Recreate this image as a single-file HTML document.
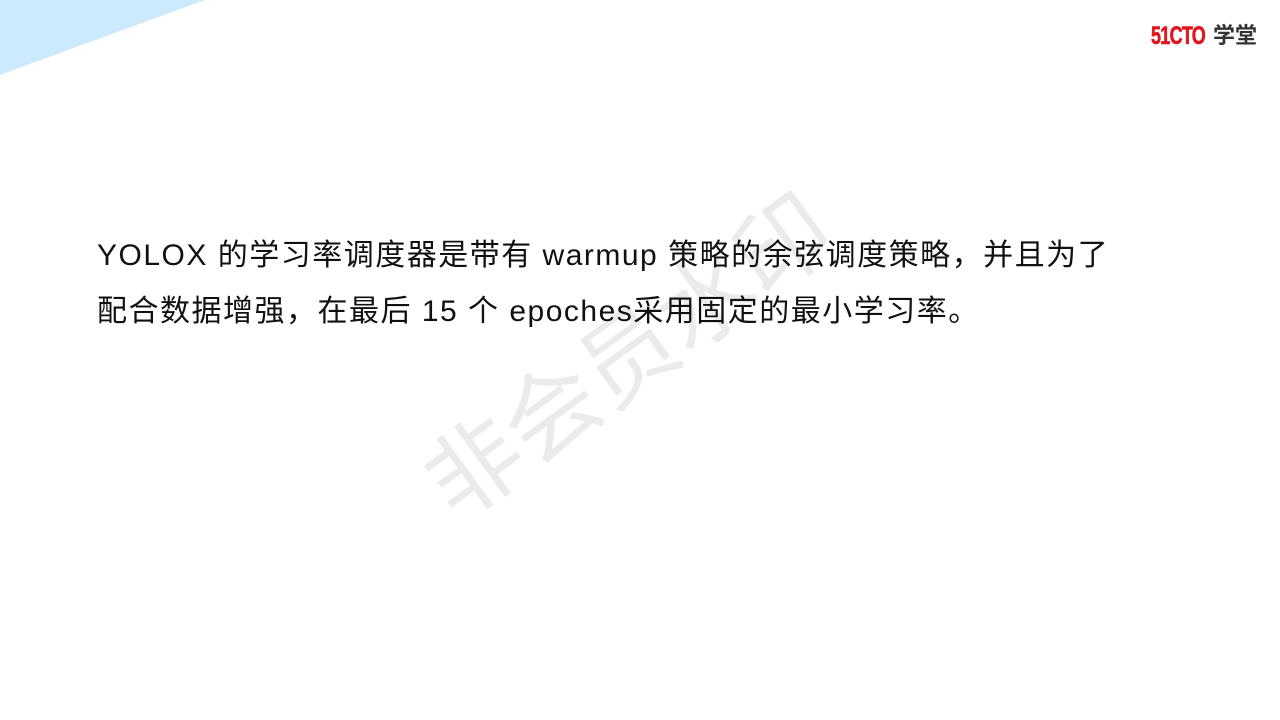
<!DOCTYPE html>
<html><head><meta charset="utf-8"><style>
html,body{margin:0;padding:0;}
body{width:1280px;height:720px;position:relative;overflow:hidden;background:#fff;font-family:"Liberation Sans","Noto Sans CJK SC",sans-serif;}
.tri{position:absolute;left:0;top:0;width:0;height:0;border-top:75px solid #cdeafd;border-right:205px solid transparent;}
.logo{position:absolute;left:1151px;top:22px;font-weight:bold;font-size:25px;line-height:28px;white-space:nowrap;}
.logo .a{color:#e0161e;font-family:"Liberation Sans Narrow","Liberation Sans",sans-serif;letter-spacing:-1px;transform:scaleX(0.72);display:inline-block;transform-origin:left;-webkit-text-stroke:0.6px #e0161e;}
.logo .b{color:#333;position:absolute;left:62px;top:0;font-size:22px;}
.txt{position:absolute;left:97px;top:228px;font-size:30px;line-height:56px;color:#111;white-space:nowrap;letter-spacing:1.5px;}
.wm{position:absolute;font-size:95px;color:rgba(0,0,0,0.08);transform:rotate(-36deg);transform-origin:left top;white-space:nowrap;top:435px;left:392px;}
</style></head><body>
<div class="tri"></div>
<div class="logo"><span class="a">51CTO</span><span class="b">学堂</span></div>
<div class="wm">非会员水印</div>
<div class="txt">YOLOX 的学习率调度器是带有 warmup 策略的余弦调度策略，并且为了<br>配合数据增强，在最后 15 个 epoches采用固定的最小学习率。</div>
</body></html>
